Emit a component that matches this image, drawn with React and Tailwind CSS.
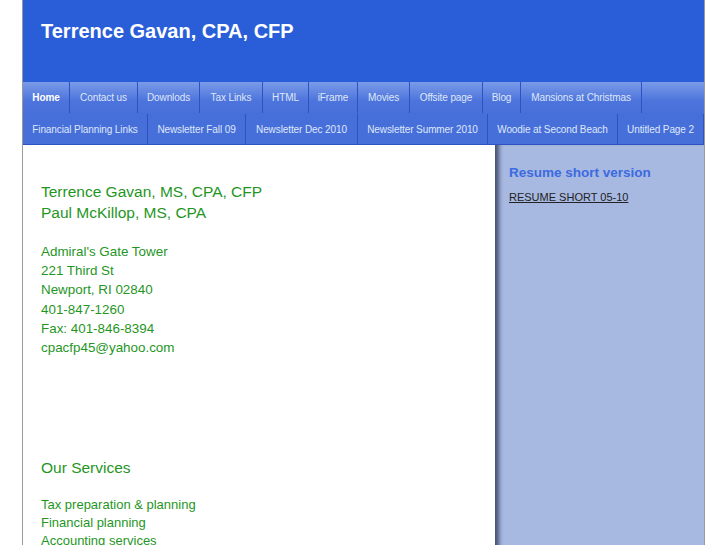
import React from 'react';

const topNav = [
  { label: 'Home', w: 'w-[47px]', active: true },
  { label: 'Contact us', w: 'w-[68px]' },
  { label: 'Downlods', w: 'w-[62px]' },
  { label: 'Tax Links', w: 'w-[63px]' },
  { label: 'HTML', w: 'w-[46px]' },
  { label: 'iFrame', w: 'w-[49px]' },
  { label: 'Movies', w: 'w-[52px]' },
  { label: 'Offsite page', w: 'w-[73px]' },
  { label: 'Blog', w: 'w-[38px]' },
  { label: 'Mansions at Christmas', w: 'w-[121px]' },
];

const bottomNav = [
  { label: 'Financial Planning Links', w: 'w-[125px]' },
  { label: 'Newsletter Fall 09', w: 'w-[98px]' },
  { label: 'Newsletter Dec 2010', w: 'w-[112px]' },
  { label: 'Newsletter Summer 2010', w: 'w-[130px]' },
  { label: 'Woodie at Second Beach', w: 'w-[130px]' },
  { label: 'Untitled Page 2', w: 'w-[86px]' },
];

const address = [
  "Admiral's Gate Tower",
  '221 Third St',
  'Newport, RI 02840',
  '401-847-1260',
  'Fax: 401-846-8394',
  'cpacfp45@yahoo.com',
];

const services = ['Tax preparation & planning', 'Financial planning', 'Accounting services'];

const NavItem = ({ item }) => (
  <a
    href="#"
    className={`${item.w} shrink-0 flex items-center justify-center border-r border-[#2c52c4] text-[10px] tracking-[-0.1px] whitespace-nowrap ${
      item.active ? 'font-bold text-white' : 'text-[#dfe7fa]'
    }`}
  >
    {item.label}
  </a>
);

export default function App() {
  return (
    <div className="min-h-screen bg-white font-['Liberation_Sans',Arial,sans-serif]">
      <div className="ml-[22px] w-[683px] min-h-[545px] border-x border-[#9a9a9a] flex flex-col">
        <header className="h-[82px] bg-[#2a5ed9] pl-[18px] pt-[19px]">
          <h1 className="text-[20px] leading-[24px] font-bold text-white">Terrence Gavan, CPA, CFP</h1>
        </header>

        <nav className="border-b border-[#2c52c4]">
          <div className="flex h-[31px] bg-gradient-to-b from-[#7b9be8] via-[#4d74dc] via-60% to-[#4870da]">
            {topNav.map((item) => (
              <NavItem key={item.label} item={item} />
            ))}
            <div className="flex-1" />
          </div>
          <div className="flex h-[31px] bg-[#476fda] pt-[1px]">
            {bottomNav.map((item) => (
              <NavItem key={item.label} item={item} />
            ))}
            <div className="flex-1" />
          </div>
        </nav>

        <div className="flex flex-1">
          <main className="w-[472px] bg-white pl-[18px] pt-[36px] pb-8 text-[#1f961f]">
            <div className="text-[15.5px] leading-[21px]">
              <p>Terrence Gavan, MS, CPA, CFP</p>
              <p>Paul McKillop, MS, CPA</p>
            </div>
            <div className="mt-[19px] text-[13.4px] leading-[19.2px]">
              {address.map((line) => (
                <p key={line}>{line}</p>
              ))}
            </div>
            <h2 className="mt-[100px] text-[15.5px] leading-[21px]">Our Services</h2>
            <ul className="mt-[18px] text-[13px] leading-[18px]">
              {services.map((s) => (
                <li key={s}>{s}</li>
              ))}
            </ul>
          </main>

          <aside className="flex-1 bg-[#a7b8e1] pl-[14px] pt-[19px] shadow-[inset_7px_0_4px_-3px_rgba(40,50,80,0.75)]">
            <h3 className="text-[13.5px] leading-[18px] font-bold text-[#3b6be0]">Resume short version</h3>
            <a href="#" className="mt-[8px] block text-[11px] leading-[14px] text-[#222] underline">
              RESUME SHORT 05-10
            </a>
          </aside>
        </div>
      </div>
    </div>
  );
}
